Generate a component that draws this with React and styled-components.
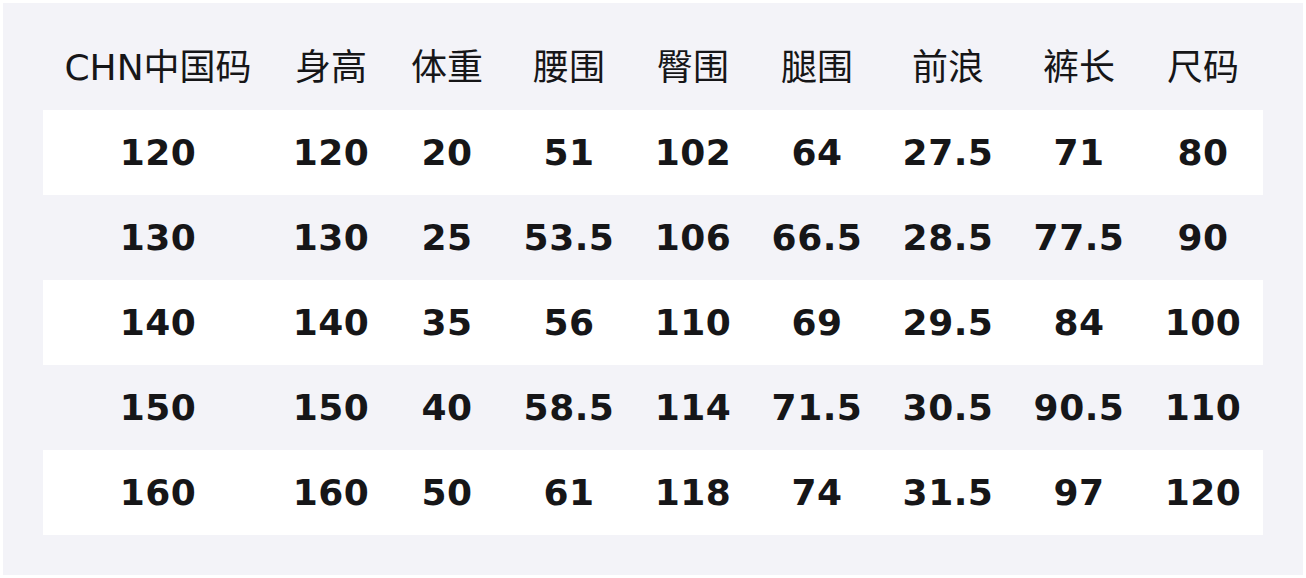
import styled, { createGlobalStyle } from "styled-components";

const GlobalStyle = createGlobalStyle`
  html, body {
    margin: 0;
    padding: 0;
    background: #ffffff;
  }
  body {
    font-family: "DejaVu Sans", "Noto Sans CJK SC", sans-serif;
  }
`;

const Page = styled.div`
  width: 1306px;
  height: 578px;
  padding: 3px;
  box-sizing: border-box;
`;

const Panel = styled.div`
  height: 572px;
  box-sizing: border-box;
  padding: 22px 40px 0 40px;
  background: #f3f3f8;
`;

const Table = styled.table`
  width: 1220px;
  table-layout: fixed;
  border-collapse: collapse;
  color: #161618;
`;

const HeadCell = styled.th`
  height: 85px;
  padding: 0 0 8px 0;
  box-sizing: border-box;
  font-size: 36px;
  font-weight: 400;
  text-align: center;
  white-space: nowrap;
  font-family: "DejaVu Sans", "Noto Sans CJK SC", sans-serif;
`;

const Row = styled.tr`
  background: ${(p) => (p.$striped ? "#ffffff" : "transparent")};
`;

const Cell = styled.td`
  height: 85px;
  padding: 0;
  font-size: 36px;
  font-weight: 700;
  text-align: center;
  white-space: nowrap;
  letter-spacing: 0.5px;
`;

const columns = [
  { label: "CHN中国码", width: 230 },
  { label: "身高", width: 116 },
  { label: "体重", width: 116 },
  { label: "腰围", width: 128 },
  { label: "臀围", width: 120 },
  { label: "腿围", width: 128 },
  { label: "前浪", width: 134 },
  { label: "裤长", width: 128 },
  { label: "尺码", width: 120 },
];

const rows = [
  ["120", "120", "20", "51", "102", "64", "27.5", "71", "80"],
  ["130", "130", "25", "53.5", "106", "66.5", "28.5", "77.5", "90"],
  ["140", "140", "35", "56", "110", "69", "29.5", "84", "100"],
  ["150", "150", "40", "58.5", "114", "71.5", "30.5", "90.5", "110"],
  ["160", "160", "50", "61", "118", "74", "31.5", "97", "120"],
];

function App() {
  return (
    <Page>
      <GlobalStyle />
      <Panel>
        <Table>
          <colgroup>
            {columns.map((c) => (
              <col key={c.label} style={{ width: c.width }} />
            ))}
          </colgroup>
          <thead>
            <tr>
              {columns.map((c) => (
                <HeadCell key={c.label}>{c.label}</HeadCell>
              ))}
            </tr>
          </thead>
          <tbody>
            {rows.map((r, i) => (
              <Row key={i} $striped={i % 2 === 0}>
                {r.map((v, j) => (
                  <Cell key={j}>{v}</Cell>
                ))}
              </Row>
            ))}
          </tbody>
        </Table>
      </Panel>
    </Page>
  );
}

export default App;
